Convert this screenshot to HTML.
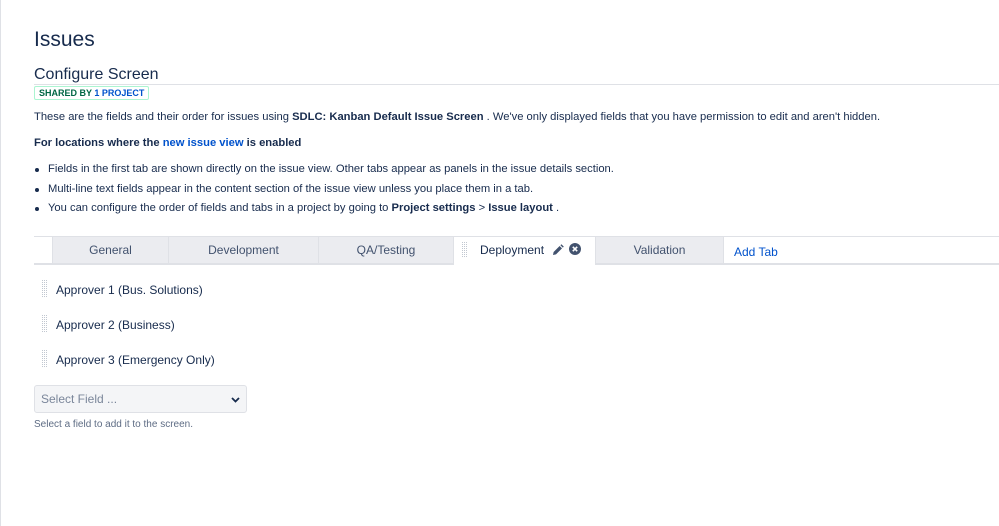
<!DOCTYPE html>
<html><head><meta charset="utf-8"><style>
*{margin:0;padding:0;box-sizing:border-box}
body{width:999px;height:526px;background:#fff;font-family:"Liberation Sans",sans-serif;color:#172b4d;position:relative;overflow:hidden}
.lb{position:absolute;left:0;top:0;width:1px;height:526px;background:#dfe1e6}
.a{position:absolute;white-space:nowrap}
h1{position:absolute;left:34px;top:28px;font-size:21px;font-weight:normal;color:#172b4d}
h2{position:absolute;left:34px;top:66px;font-size:16px;font-weight:normal;color:#172b4d}
.hr{position:absolute;left:34px;right:0;top:84px;height:1px;background:#dfe1e6}
.lz{position:absolute;left:34px;top:86px;height:14px;border:1px solid #abf5d1;border-radius:2px;font-size:9px;font-weight:bold;padding:0 4px;line-height:12px;color:#006644}
.t{font-size:11.2px;color:#172b4d}
b{font-weight:bold}
a{color:#0052cc;text-decoration:none}
ul{position:absolute;left:34px;top:163px;list-style:none;font-size:11.2px}
ul li{height:19.5px;padding-left:14px;position:relative}
ul li:before{content:"";position:absolute;left:1px;top:5px;width:4px;height:4px;border-radius:50%;background:#172b4d}
.tb{position:absolute;left:34px;right:0;top:236px;height:1px;background:#dfe1e6}
.bb{position:absolute;left:34px;right:0;top:263px;height:2px;background:#dfe1e6}
.tab{position:absolute;top:237px;height:26px;background:#ebecf0;border-left:1px solid #dfe1e6;font-size:12px;line-height:27px;text-align:center;color:#42526e}
.grip{position:absolute;width:6px;background:linear-gradient(90deg,transparent 50%,#fff 50%),linear-gradient(transparent 50%,#fff 50%),#c1c7d0;background-size:2px 2px}
.f{position:absolute;left:56px;font-size:12px;color:#172b4d}
.sel{position:absolute;left:34px;top:385px;width:213px;height:28px;background:#f4f5f7;border:1px solid #dfe1e6;border-radius:3px;font-size:12px;color:#7a869a;padding:6px 6px}
</style></head><body>
<div class="lb"></div>
<h1>Issues</h1>
<h2>Configure Screen</h2>
<div class="hr"></div>
<div class="lz">SHARED BY <span style="color:#0052cc">1 PROJECT</span></div>
<div class="a t" style="left:34px;top:111px">These are the fields and their order for issues using <b>SDLC: Kanban Default Issue Screen</b> . We've only displayed fields that you have permission to edit and aren't hidden.</div>
<div class="a t" style="left:34px;top:137px"><b>For locations where the <a>new issue view</a> is enabled</b></div>
<ul>
<li>Fields in the first tab are shown directly on the issue view. Other tabs appear as panels in the issue details section.</li>
<li>Multi-line text fields appear in the content section of the issue view unless you place them in a tab.</li>
<li>You can configure the order of fields and tabs in a project by going to <b>Project settings</b> &gt; <b>Issue layout</b> .</li>
</ul>
<div class="tb"></div>
<div class="bb"></div>
<div class="tab" style="left:52px;width:116px">General</div>
<div class="tab" style="left:168px;width:150px">Development</div>
<div class="tab" style="left:318px;width:135px">QA/Testing</div>
<div class="tab" style="left:453px;width:142px;background:#fff;height:28px;text-align:left;padding-left:26px;color:#172b4d">Deployment
<svg width="12" height="12" viewBox="0 0 12 12" style="position:absolute;left:98px;top:7px"><path d="M1 11l.6-3 6-6 2.4 2.4-6 6z M8.4 1.2l1-1 2.4 2.4-1 1z" fill="#42526e"/></svg>
<svg width="12" height="12" viewBox="0 0 12 12" style="position:absolute;left:115px;top:6px"><circle cx="6" cy="6" r="6" fill="#42526e"/><path d="M3.8 3.8l4.4 4.4M8.2 3.8l-4.4 4.4" stroke="#fff" stroke-width="1.6"/></svg>
<div class="grip" style="left:8px;top:5px;height:16px"></div></div>
<div class="tab" style="left:595px;width:129px;border-right:1px solid #dfe1e6">Validation</div>
<div class="a" style="left:734px;top:245px;font-size:12px;color:#0052cc">Add Tab</div>
<div class="grip" style="left:42px;top:280px;height:18px"></div>
<div class="f" style="top:283px">Approver 1 (Bus. Solutions)</div>
<div class="grip" style="left:42px;top:315px;height:18px"></div>
<div class="f" style="top:318px">Approver 2 (Business)</div>
<div class="grip" style="left:42px;top:350px;height:18px"></div>
<div class="f" style="top:353px">Approver 3 (Emergency Only)</div>
<div class="sel">Select Field ...
<svg width="9" height="6" viewBox="0 0 9 6" style="position:absolute;right:6px;top:11px"><path d="M1 1l3.5 3.5L8 1" stroke="#172b4d" stroke-width="1.8" fill="none"/></svg></div>
<div class="a" style="left:34px;top:419px;font-size:10px;color:#5e6c84">Select a field to add it to the screen.</div>
</body></html>
